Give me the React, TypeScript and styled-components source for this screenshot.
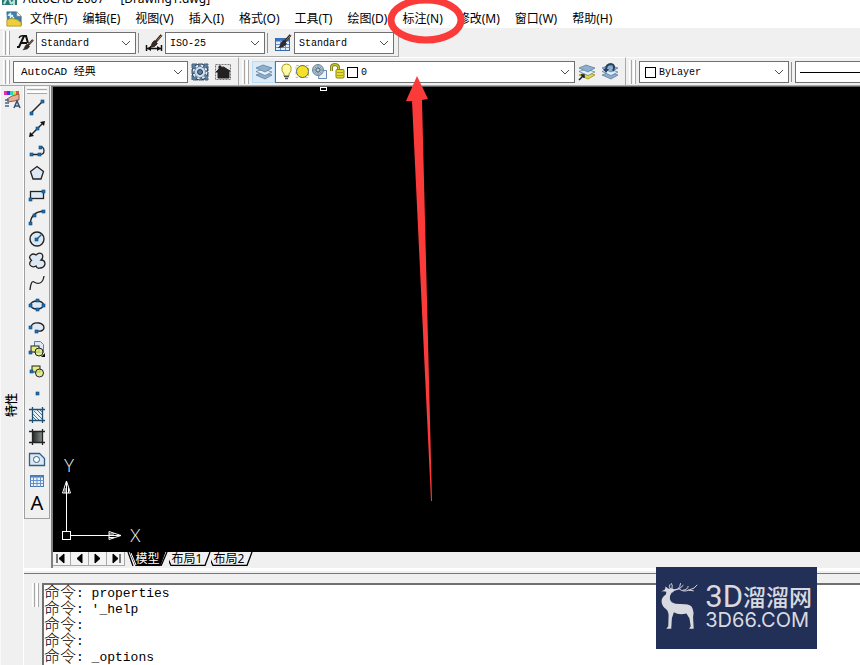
import React from "react";
import styled, { createGlobalStyle } from "styled-components";

const GlobalStyle = createGlobalStyle`
  * { box-sizing: border-box; }
  html, body, #root { height: 100%; }
  body {
    margin: 0;
    background: #f0f0f0;
    overflow: hidden;
    color: #000;
    font: 12px "Noto Sans", "Noto Sans CJK SC", sans-serif;
  }
  button, select { font: inherit; color: inherit; }
`;

const Window = styled.div`
  position: relative;
  display: flex;
  flex-direction: column;
  height: 100%;
  overflow: hidden;
`;

const TitleBar = styled.header`
  display: flex;
  align-items: flex-end;
  gap: 6px;
  height: 8px;
  padding-left: 2px;
  background: #fff;
  overflow: hidden;
  line-height: 18px;
  white-space: pre;
`;

const MenuBar = styled.nav`
  display: flex;
  align-items: center;
  gap: 1px;
  height: 20px;
  padding: 1px 0 0 6px;
  background: #fff;
`;

const MenuItem = styled.button`
  border: 0;
  padding: 0 7px;
  background: none;
  line-height: 19px;
  white-space: nowrap;
`;

const ToolbarRow = styled.div`
  display: flex;
  height: 29px;
  flex: none;
`;

const ToolGroup = styled.div<{ $grow?: boolean }>`
  display: flex;
  align-items: center;
  flex: ${(p) => (p.$grow ? "1 0 auto" : "none")};
  padding: 1px 4px 0 3px;
  border-top: 1px solid #fff;
  border-right: 1px solid #a8a8a8;
  border-bottom: 1px solid #a8a8a8;
`;

const Grip = styled.span<{ $flat?: boolean }>`
  flex: none;
  width: ${(p) => (p.$flat ? "20px" : "7px")};
  height: ${(p) => (p.$flat ? "7px" : "24px")};
  margin: ${(p) => (p.$flat ? "1px 0 2px" : "0 3px 0 0")};
  border: solid #a8a8a8;
  border-width: ${(p) => (p.$flat ? "0 0 1px" : "0 1px 0 0")};
  background: linear-gradient(${(p) => (p.$flat ? "180deg" : "90deg")}, #fff 1px, #f0f0f0 1px 2px, #a8a8a8 2px 3px, #f0f0f0 3px 4px, #fff 4px 6px);
`;

const Divider = styled.span`
  width: 1px;
  height: 20px;
  margin: 0 3px 0 2px;
  background: #909090;
`;

const IconButton = styled.button<{ $wide?: boolean; $active?: boolean }>`
  display: grid;
  place-items: center;
  flex: none;
  width: ${(p) => (p.$wide ? "23px" : "22px")};
  height: 22px;
  padding: 0;
  border: 1px solid ${(p) => (p.$active ? "#bcdcf4" : "transparent")};
  background: ${(p) => (p.$active ? "#dcebf7" : "none")};
`;

const Field = styled.div<{ $width: number; $grow?: boolean }>`
  display: flex;
  align-items: center;
  flex: ${(p) => (p.$grow ? "1 0" : "0 0")} ${(p) => p.$width}px;
  height: 22px;
  padding-left: 4px;
  border: 1px solid #707070;
  background: #fff;
`;

const SelectArea = styled.div`
  display: grid;
  flex: 1;
  align-items: center;
  > * { grid-area: 1 / 1; }
  > svg { justify-self: end; margin-right: 4px; pointer-events: none; }
`;

const Select = styled.select<{ $size?: number }>`
  appearance: none;
  width: 100%;
  height: 20px;
  padding: 0;
  border: 0;
  background: transparent;
  font: ${(p) => p.$size ?? 10}px "Liberation Mono", "Noto Sans CJK SC", monospace;
`;

const Swatch = styled.span`
  flex: none;
  width: 11px;
  height: 11px;
  margin: 0 3px 0 1px;
  border: 1px solid #000;
  background: #fff;
`;

const LineSample = styled.span`
  height: 1px;
  background: #000;
`;

const Workspace = styled.div`
  display: flex;
  flex: 1;
  min-height: 0;
`;

const Palette = styled.aside`
  display: flex;
  flex-direction: column;
  align-items: center;
  flex: none;
  width: 24px;
  padding-top: 3px;
  border-left: 1px solid #fafafa;
  border-right: 1px solid #fff;
`;

const PaletteName = styled.span`
  margin: auto 0;
  padding-top: 34px;
  writing-mode: vertical-rl;
  text-orientation: sideways;
  > b { display: block; font-weight: 500; line-height: 16px; transform: rotate(180deg); }
`;

const Main = styled.main`
  display: flex;
  flex-direction: column;
  flex: 1;
  min-width: 0;
`;

const Editor = styled.section`
  display: flex;
  flex: 1;
  min-height: 0;
`;

const DrawBar = styled.div`
  display: flex;
  flex-direction: column;
  align-items: center;
  align-self: flex-start;
  flex: none;
  width: 26px;
  padding-bottom: 4px;
  border: solid #a0a0a0;
  border-width: 0 1px 1px;
`;

const Sheet = styled.div`
  display: flex;
  flex-direction: column;
  flex: 1;
  min-width: 0;
  margin-left: 1px;
  border-top: 1px solid #606060;
  border-left: 2px solid #808080;
`;

const Canvas = styled.div`
  position: relative;
  flex: 1;
  background: #000;
  > svg { position: absolute; left: 0; bottom: 0; }
`;

const PickBox = styled.i`
  position: absolute;
  left: 267px;
  top: 0;
  width: 7px;
  height: 4px;
  border: 1px solid #fff;
`;

const TabStrip = styled.div`
  display: flex;
  height: 16px;
  padding-bottom: 2px;
`;

const NavButton = styled.button`
  display: grid;
  place-items: center;
  width: 18px;
  padding: 0;
  border: solid #a8a8a8;
  border-width: 0 1px 1px 0;
  background: #f4f4f4;
`;

const SheetTab = styled.button<{ $active?: boolean }>`
  display: grid;
  align-items: center;
  width: 42px;
  height: 14px;
  padding: 0;
  border: 0;
  background: none;
  color: ${(p) => (p.$active ? "#fff" : "#000")};
  line-height: 14px;
  text-align: center;
  white-space: nowrap;
  > * { grid-area: 1 / 1; }
  > span { z-index: 1; margin-right: ${(p) => (p.$active ? "1px" : "6px")}; }
`;

const TabGap = styled.span<{ $width: number }>`
  width: ${(p) => p.$width}px;
`;

const Splitter = styled.div`
  height: 6px;
  border-top: 3px solid #fff;
  border-bottom: 1px solid #787878;
`;

const CommandPanel = styled.section`
  display: flex;
  height: 91px;
  padding: 9px 0 0 8px;
`;

const History = styled.div`
  flex: 1;
  padding-top: 1px;
  border-top: 2px solid #707070;
  border-left: 2px solid #707070;
  background: #fff;
`;

const HistoryLine = styled.p`
  display: flex;
  align-items: center;
  height: 16px;
  margin: 0;
  font: 13px/16px "Liberation Mono", monospace;
  white-space: pre;
  > b { flex: none; width: 32px; padding-bottom: 6px; font: 300 16px/16px "Noto Sans CJK SC", sans-serif; }
`;

const Markup = styled.svg`
  position: absolute;
  left: 380px;
  top: 0;
  pointer-events: none;
`;

const Watermark = styled.div`
  position: absolute;
  right: 43px;
  bottom: 16px;
  display: flex;
  align-items: center;
  gap: 7px;
  height: 82px;
  padding: 0 5px 4px;
  background: #222f56;
  color: #d8dae0;
`;

const BrandText = styled.div`
  display: flex;
  flex-direction: column;
  white-space: nowrap;
`;

const BrandName = styled.div`
  display: flex;
  align-items: center;
  height: 27px;
  font: 500 23px/27px "Noto Sans CJK SC", sans-serif;
  > span { font: 400 31px/27px Roboto, sans-serif; }
`;

const BrandSite = styled.div`
  font: 400 20px/20px Inter, sans-serif;
`;

const Chevron = () => (
  <svg width="10" height="6" viewBox="0 0 10 6" fill="none" stroke="#505050">
    <path d="M1 1l4 4 4-4" />
  </svg>
);

type ComboProps = { label: string; value: string; width: number; size?: number; children?: React.ReactNode };

const Combo = ({ label, value, width, size, children }: ComboProps) => (
  <Field $width={width}>
    {children}
    <SelectArea>
      <Select aria-label={label} $size={size}>
        <option>{value}</option>
      </Select>
      <Chevron />
    </SelectArea>
  </Field>
);

const Icon = ({ children, size = 18 }: { children: React.ReactNode; size?: number }) => (
  <svg width={size} height={size} viewBox="0 0 18 18" fill="none" stroke="#222" strokeWidth="1">
    {children}
  </svg>
);

const Nodes = ({ at }: { at: number[][] }) => (
  <>
    {at.map(([x, y]) => (
      <rect key={`${x}-${y}`} x={x - 1} y={y - 1} width="3" height="3" fill="#1f6fae" stroke="#0d4a80" strokeWidth=".6" />
    ))}
  </>
);

const Brush = () => (
  <g>
    <path d="M16.500 1L10.500 8" stroke="#2b2320" strokeWidth="2.500" />
    <path d="M16.500 1.500L12 6.500" stroke="#a8825c" />
    <path d="M9.500 6.500l3 3q-2 4-8 4 2-1 2-3 1-3 3-4z" fill="#3a2a22" stroke="#221814" strokeWidth=".6" />
  </g>
);

const TextStyleIcon = () => (
  <Icon>
    <path d="M1 13h2L8 2h2l2 7M4 9h7" stroke="#111" strokeWidth="2" />
    <path d="M3 4q1-3 5-2" stroke="#111" strokeWidth="1.300" />
    <g transform="translate(3 5) scale(.85 .8)"><Brush /></g>
  </Icon>
);

const DimStyleIcon = () => (
  <Icon>
    <Brush />
    <path d="M1.500 11v6M16.500 11v6M2 14.500h14" stroke="#111" strokeWidth="1.500" />
    <path d="M2 14.500l4-2.500v5zM16 14.500l-4-2.500v5z" fill="#111" stroke="none" />
  </Icon>
);

const TableStyleIcon = () => (
  <Icon>
    <rect x="1.500" y="4.500" width="14" height="12" fill="#e5effb" stroke="#3569a8" />
    <path d="M2 6h13" stroke="#3c74bc" strokeWidth="3" />
    <path d="M2 10.500h13M2 13.500h13M6.500 6v10M11.500 6v10" stroke="#6293ca" />
    <Brush />
  </Icon>
);

const GearIcon = () => (
  <Icon>
    <rect x="1" y="1" width="16" height="16" fill="#5f7f9f" stroke="#48617c" strokeDasharray="5 1" />
    <circle cx="9" cy="9" r="6.500" stroke="#1f3347" strokeWidth="3.500" strokeDasharray="3.100 2" />
    <circle cx="9" cy="9" r="6.500" stroke="#dfeaf4" strokeWidth="2" strokeDasharray="2.600 2.500" />
    <circle cx="9" cy="9" r="4.500" fill="#d4e2ef" stroke="#c6d9ea" strokeWidth="1.500" />
    <circle cx="9" cy="9" r="2.500" fill="#5f7f9f" stroke="#263c52" />
  </Icon>
);

const HomeIcon = () => (
  <Icon>
    <rect x="1.500" y="1.500" width="15" height="15" fill="#e4e4e4" stroke="#777" strokeDasharray="2 1" />
    <path d="M2 9l3-3V3h2v1.500L9.500 4 16 8h-1v7H4V9z" fill="#222" />
  </Icon>
);

const Layers = ({ bottom = "#8eabc8" }: { bottom?: string }) => (
  <g stroke="#53779c" strokeWidth=".7">
    <path d="M1 12l8-3 8 3-7 4z" fill={bottom} stroke={bottom === "#8eabc8" ? "#53779c" : "#8c8420"} />
    <path d="M1 8.500L8 6l9 3-7 3.500z" fill="#e6f0f8" />
    <path d="M1 5l7-3 9 3-7 4z" fill="#8eaece" />
  </g>
);

const LayerIcon = () => <Icon><Layers /></Icon>;
const LayerCurrentIcon = () => (
  <Icon>
    <Layers bottom="#e5d936" />
    <path d="M1 17l5-5M3 12h3v3" stroke="#123" strokeWidth="1.500" />
  </Icon>
);
const LayerPreviousIcon = () => (
  <Icon>
    <Layers />
    <path d="M12 8q3-6-2-7-5 0-5 6" stroke="#25415f" strokeWidth="2" />
    <path d="M2 6h6l-3 4z" fill="#25415f" stroke="none" />
  </Icon>
);

const LayerState = () => (
  <svg width="66" height="18" viewBox="0 0 66 18" fill="none" aria-hidden="true">
    <path d="M4 11Q1 8 2 4q1-3 4.500-3T11 4q1 4-2 7v2H4z" fill="#fdf9a4" stroke="#a69b25" />
    <path d="M4 13.500h5M5 15.500h3" stroke="#555" strokeWidth="1.300" />
    <path d="M16 2.500h12.500v12H16z" stroke="#d2ca4a" strokeDasharray="3 2" />
    <circle cx="22.500" cy="8.500" r="6" fill="#f7e02a" stroke="#466d80" />
    <path d="M39.500 7.500h7v8h-8z" fill="#edf3f9" stroke="#6688b4" />
    <circle cx="38" cy="7" r="5.500" fill="#a6bac8" stroke="#70899c" />
    <path d="M38 2v10M33 7h10M35 4l6 6M41 4l-6 6" stroke="#7f98a9" />
    <circle cx="38" cy="7" r="2" fill="#bdd0dc" stroke="#567" />
    <path d="M51.500 8V4q0-2 3-2.500 4 0 4 3v4" stroke="#83881e" strokeWidth="3" />
    <path d="M51.500 8V4q0-2 3-2.500 4 0 4 3v4" stroke="#ddda35" />
    <rect x="56" y="6.500" width="8" height="8.500" rx="1" fill="#e6d929" stroke="#838520" />
    <path d="M57 9.500h6M57 12.500h6" stroke="#aaa32b" />
  </svg>
);

const PropertiesIcon = () => (
  <Icon size={18}>
    <path d="M1 2h3" stroke="#e12db4" strokeWidth="4" />
    <path d="M4 2h3" stroke="#552de0" strokeWidth="4" />
    <path d="M7 2h3" stroke="#2ad3ca" strokeWidth="4" />
    <path d="M10 2h3" stroke="#d5df25" strokeWidth="4" />
    <path d="M13 2h3" stroke="#e25532" strokeWidth="4" />
    <path d="M4 8l5-3 7-2v6l-5 1-6 1z" fill="#e8ad94" stroke="#925c4b" />
    <path d="M2 9h4M2 12h4M2 15h4" stroke="#486787" strokeWidth="1.500" />
    <path d="M11 17l3-7 3 7M12 15h4" stroke="#36516e" strokeWidth="1.500" />
  </Icon>
);

const soft = "#dce8f3";
const blue = "#2d5f8e";
const crop = "M4.500 1v16M14.500 1v16M1 3.500h16M1 14.500h16";

const drawTools: [string, React.ReactNode][] = [
  ["直线", <><path d="M3 15L15 3" strokeWidth="1.500" /><Nodes at={[[3, 15], [14, 3]]} /></>],
  ["构造线", <><path d="M3 15L15 3" strokeWidth="1.500" /><path d="M1 17l1-5 4 4zM17 1l-5 1 4 4z" fill="#111" stroke="none" /><Nodes at={[[9, 8]]} /></>],
  ["多段线", <><path d="M3 12.500h9q4 0 4-4 0-4-4-3.500" strokeWidth="1.300" /><Nodes at={[[3, 12], [11, 12], [12, 5]]} /></>],
  ["正多边形", <path d="M9 2.500l6.500 5-2.500 7.500H5L2.500 7.500z" fill={soft} strokeWidth="1.300" />],
  ["矩形", <><rect x="2.500" y="5.500" width="13" height="7" fill={soft} strokeWidth="1.300" /><Nodes at={[[2, 13], [15, 5]]} /></>],
  ["圆弧", <><path d="M2.500 15Q3 4 16 3" strokeWidth="1.300" /><Nodes at={[[2, 15], [6, 7], [15, 3]]} /></>],
  ["圆", <><circle cx="9" cy="9" r="7" fill={soft} strokeWidth="1.400" /><path d="M8 10l6-6" stroke={blue} strokeWidth="1.500" /><Nodes at={[[8, 9]]} /></>],
  ["修订云线", <path d="M3.500 8.500Q0 5 3 3q2-2 5 0 3-3 6-1 2 3-1 6 4 0 4 4-1 4-5 4-3 1-4-2-4 2-6-1-1-3 1.500-4.500z" fill={soft} strokeWidth="1.300" />],
  ["样条曲线", <path d="M2 16Q3 6 6 8t6 1q3-1 4-7" strokeWidth="1.300" />],
  ["椭圆", <><ellipse cx="9" cy="9" rx="6.500" ry="4" fill={soft} strokeWidth="1.300" /><Nodes at={[[2, 9], [15, 9], [9, 4], [9, 13]]} /></>],
  ["椭圆弧", <><path d="M3 9q1-5 8-4 5 1 5 5-1 4-7 3z" fill={soft} stroke="none" /><path d="M3 9q1-5 8-4 5 1 5 5-1 4-7 3" strokeWidth="1.300" /><Nodes at={[[2, 9], [8, 13]]} /></>],
  ["插入块", <><path d="M6.500 1.500h6l3 3v8h-9z" fill={soft} stroke="#5a81a7" /><rect x="3" y="6" width="8" height="6" fill="#e4ef83" /><circle cx="11" cy="12" r="4" fill="#dce878" fillOpacity=".8" /><Nodes at={[[2, 12]]} /><path d="M17 13v4h-4z" fill="#111" stroke="none" /></>],
  ["创建块", <><rect x="4" y="4" width="8" height="6" fill="#e4ef83" /><circle cx="11.500" cy="11" r="4" fill="#dce878" fillOpacity=".8" /><Nodes at={[[3, 9]]} /></>],
  ["点", <Nodes at={[[9, 9]]} />],
  ["图案填充", <><rect x="4.500" y="3.500" width="10" height="11" fill="#e9f3fa" /><path d="M5 8l6 6M6 5l8 8M9 4l5 5M5 11l3 3M12 4l2 2" stroke="#387ca6" /><path d={crop} stroke="#244e6d" strokeWidth="1.300" /></>],
  ["渐变色", <><defs><linearGradient id="shade"><stop stopColor="#20262d" /><stop offset="1" stopColor="#8b9286" /></linearGradient></defs><rect x="4.500" y="3.500" width="10" height="11" fill="url(#shade)" /><path d={crop} strokeWidth="1.300" /></>],
  ["面域", <><path d="M1.500 3.500h10l5 5v7h-15z" fill={soft} stroke="#2f5f88" strokeWidth="1.300" /><circle cx="8.500" cy="9.500" r="3" fill="#fff" stroke="#355d80" /></>],
  ["表格", <><rect x="2.500" y="3.500" width="13" height="11" fill="#eaf2fc" stroke="#4d77b4" /><path d="M2 4.500h14" stroke="#4778bd" strokeWidth="2" /><path d="M2 8.500h14M2 11.500h14M5.500 4v11M9 4v11M12.500 4v11" stroke="#6691cb" /></>],
];

const MultiTextGlyph = styled.span`
  font: 20px/20px "Noto Sans", sans-serif;
`;

const menus = ["文件(F)", "编辑(E)", "视图(V)", "插入(I)", "格式(O)", "工具(T)", "绘图(D)", "标注(N)", "修改(M)", "窗口(W)", "帮助(H)"];
const history = ["properties", "'_help", "", "", "_options"];
const navGlyphs: [string, string][] = [
  ["第一个", "M2 2v9M9 2v9L4 6.500z"],
  ["上一个", "M9 2v9L4 6.500z"],
  ["下一个", "M4 2v9l5-4.500z"],
  ["最后一个", "M4 2v9l5-4.500zM11 2v9"],
];

const TabShape = ({ active }: { active?: boolean }) => (
  <svg width="42" height="14" viewBox="0 0 42 14" fill="none" stroke="#000">
    {active ? (
      <>
        <path d="M3 0l6 14h24l5-14z" fill="#000" />
        <path d="M4 1l5 12" stroke="#fff" />
        <path d="M1 0l5 14M40 0l-6 14" strokeWidth="1.300" />
      </>
    ) : (
      <path d="M-1 7l3 6.500h34L41 0" strokeWidth="1.300" />
    )}
  </svg>
);

const Deer = () => (
  <svg width="37" height="50" viewBox="64 122 112 150" fill="#d8dae0" stroke="#d8dae0" strokeLinecap="round">
    <path stroke="none" d="M65 153L76 147l2-9 8 7 12-1 9 4-7 7-4 2q-7 10-5 19 3 12 17 14l28 2q20 0 24 14 5 13 1 24l2 36h-14l5-8-4-24-9-14q-24 5-38-4l-6 18-2 32H80l6-8 1-34q-1-15-12-21-11-10-9-24 1-9 13-17l1-8-8-2-7 1z" />
    <g fill="none" strokeWidth="3">
      <path d="M92 145q-6-6-1-13M97 145q3-11-1-16M101 149q20 2 22-20M106 148q15 1 25-13" />
      <path d="M119 145q13 12 31 3 16-3 23-14M132 149q14-2 14-11M148 149l14 2" />
    </g>
  </svg>
);

const AppIcon = () => (
  <Icon size={16}>
    <path d="M1 1h11l5 5v10H2z" fill="#3f7fae" stroke="#376d96" />
    <path d="M1 10q8-4 16 3v4H1z" fill="#edce3c" stroke="#b59524" />
    <path d="M12 1v5h5" fill="#fff" stroke="#6e8293" />
    <path d="M3 3l6 5M5 2v6M2 5h6" stroke="#d8f4fc" strokeWidth="1.500" />
  </Icon>
);

export default function App() {
  return (
    <Window>
      <GlobalStyle />
      <TitleBar>
        <svg width="15" height="16" viewBox="0 0 15 16">
          <path d="M0 3h15v10H0z" fill="#267a72" />
          <path d="M2 12l4-8 3 8M9 12l3-3v4" fill="none" stroke="#b9e0d8" strokeWidth="2" />
        </svg>
        <span>AutoCAD 2007 - </span>
        <span>[Drawing1.dwg]</span>
      </TitleBar>
      <MenuBar>
        <AppIcon />
        {menus.map((name) => <MenuItem key={name}>{name}</MenuItem>)}
      </MenuBar>

      <ToolbarRow>
        <ToolGroup>
          <Grip />
          <IconButton $wide aria-label="文字样式"><TextStyleIcon /></IconButton>
          <Combo label="文字样式" value="Standard" width={100} />
          <Divider />
          <IconButton $wide aria-label="标注样式"><DimStyleIcon /></IconButton>
          <Combo label="标注样式" value="ISO-25" width={100} />
          <Divider />
          <IconButton $wide aria-label="表格样式"><TableStyleIcon /></IconButton>
          <Combo label="表格样式" value="Standard" width={100} />
        </ToolGroup>
      </ToolbarRow>

      <ToolbarRow>
        <ToolGroup>
          <Grip />
          <Combo label="工作空间" value="AutoCAD 经典" width={175} size={11}>
            <TabGap $width={3} />
          </Combo>
          <IconButton $wide aria-label="工作空间设置"><GearIcon /></IconButton>
          <IconButton $wide aria-label="我的工作空间"><HomeIcon /></IconButton>
        </ToolGroup>
        <ToolGroup>
          <Grip />
          <IconButton $wide $active aria-label="图层特性"><LayerIcon /></IconButton>
          <Combo label="图层" value="0" width={300}>
            <LayerState />
            <Swatch />
          </Combo>
          <IconButton $wide aria-label="置为当前"><LayerCurrentIcon /></IconButton>
          <IconButton $wide aria-label="上一个图层"><LayerPreviousIcon /></IconButton>
        </ToolGroup>
        <ToolGroup $grow>
          <Grip />
          <Combo label="颜色" value="ByLayer" width={150}><Swatch /></Combo>
          <Divider />
          <Field $width={66} $grow>
            <SelectArea>
              <LineSample />
              <Select aria-label="线型"><option aria-label="ByLayer" /></Select>
            </SelectArea>
          </Field>
        </ToolGroup>
      </ToolbarRow>

      <Workspace>
        <Palette>
          <IconButton aria-label="特性"><PropertiesIcon /></IconButton>
          <PaletteName><b>特性</b></PaletteName>
        </Palette>
        <Main>
          <Editor>
            <DrawBar>
              <Grip $flat />
              {drawTools.map(([name, art]) => (
                <IconButton key={name} aria-label={name}><Icon>{art}</Icon></IconButton>
              ))}
              <IconButton aria-label="多行文字"><MultiTextGlyph>A</MultiTextGlyph></IconButton>
            </DrawBar>
            <Sheet>
              <Canvas>
                <PickBox />
                <svg width="100" height="100" viewBox="0 0 100 100" fill="none" stroke="#fff">
                  <rect x="9.500" y="79.500" width="8" height="8" />
                  <path d="M13.500 79V29M18 83.500h50" />
                  <path d="M13.500 29l-4 12h8zM12 36v5M15.500 36v5M68 83.500l-12-4v8zM61 82h-5M61 85.500h-5" />
                  <g fill="#fff" stroke="none" fontFamily="Lato, sans-serif" fontWeight="300" fontSize="17">
                    <text x="11" y="20">Y</text>
                    <text x="77" y="90">X</text>
                  </g>
                </svg>
              </Canvas>
              <TabStrip>
                {navGlyphs.map(([name, d]) => (
                  <NavButton key={name} aria-label={name}>
                    <svg width="13" height="13" viewBox="0 0 13 13" fill="#000" stroke="#000"><path d={d} /></svg>
                  </NavButton>
                ))}
                <TabGap $width={2} />
                <SheetTab $active><TabShape active /><span>模型</span></SheetTab>
                <SheetTab><TabShape /><span>布局1</span></SheetTab>
                <SheetTab><TabShape /><span>布局2</span></SheetTab>
              </TabStrip>
            </Sheet>
          </Editor>
          <Splitter />
          <CommandPanel>
            <Grip />
            <History>
              {history.map((text, i) => <HistoryLine key={i}><b>命令</b>: {text}</HistoryLine>)}
            </History>
          </CommandPanel>
        </Main>
      </Workspace>

      <Markup width="90" height="505" viewBox="0 0 90 505" fill="none">
        <ellipse cx="46" cy="20" rx="35" ry="20" stroke="#fb3a3a" strokeWidth="7" />
        <path d="M37 76L48 99l-6 1 10 401h-1L32 101l-6 0z" fill="#fb3a3a" />
      </Markup>

      <Watermark>
        <Deer />
        <BrandText>
          <BrandName><span>3D</span>溜溜网</BrandName>
          <BrandSite>3D66.COM</BrandSite>
        </BrandText>
      </Watermark>
    </Window>
  );
}
